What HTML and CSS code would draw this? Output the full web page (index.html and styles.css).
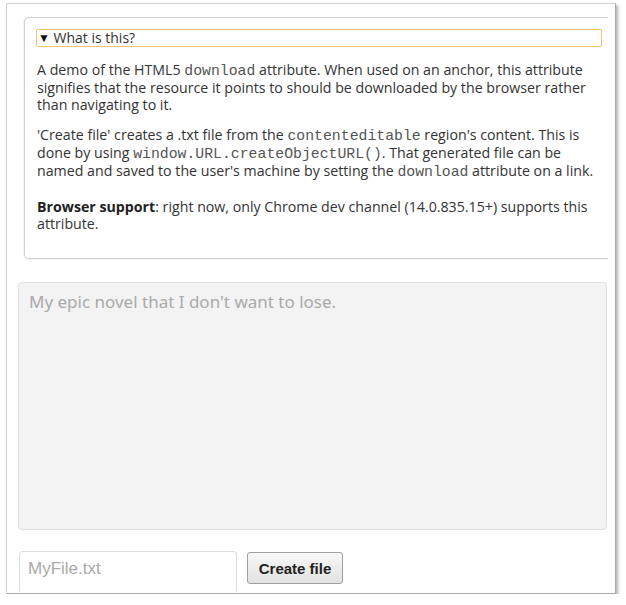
FILE: index.html
```html
<!DOCTYPE html>
<html>
<head>
<meta charset="utf-8">
<link rel="stylesheet" href="styles.css">
</head>
<body>
<div class="panel">
  <div class="details">
    <div class="summary"><span class="tri">&#9660;</span> What is this?</div>
    <p>A demo of the HTML5 <code>download</code> attribute. When used on an anchor, this attribute signifies that the resource it points to should be downloaded by the browser rather than navigating to it.</p>
    <p>'Create file' creates a .txt file from the <code>contenteditable</code> region's content. This is done by using <code>window.URL.createObjectURL()</code>. That generated file can be named and saved to the user's machine by setting the <code>download</code> attribute on a link.</p>
    <p class="support"><strong>Browser support</strong>: right now, only Chrome dev channel (14.0.835.15+) supports this attribute.</p>
  </div>
  <div class="editor">My epic novel that I don't want to lose.</div>
  <div class="controls">
    <div class="filename">MyFile.txt</div>
    <button class="btn">Create file</button>
  </div>
</div>
</body>
</html>
```

FILE: styles.css
```css
html, body {
  margin: 0;
  padding: 0;
  background: #fff;
}
body {
  font-family: "Open Sans", "Noto Sans", sans-serif;
  color: #333;
}
.panel {
  box-sizing: border-box;
  margin: 3px 0 0 6px;
  width: 610px;
  height: 591px;
  border: 1px solid #d2d2d2;
  border-right-color: #aaa;
  border-bottom-color: #aaa;
  box-shadow: 2px 2px 3px rgba(0,0,0,0.3);
  padding: 13px 0 0 0;
  overflow: hidden;
}
.details {
  margin: 0 7px 0 17px;
  border: 1px solid #d0d0d0;
  border-right: none;
  border-radius: 5px 0 0 5px;
  padding: 11px 6px 25px 11px;
  box-shadow: -1px 1px 1px rgba(0,0,0,0.05);
}
.summary {
  border: 1px solid #f3c46c;
  border-radius: 2px;
  height: 16px;
  line-height: 16px;
  font-size: 14px;
  padding-left: 1px;
  color: #333;
}
.tri {
  font-size: 12px;
  color: #111;
  position: relative;
  top: -1px;
}
.details p {
  margin: 12.5px 0 0 1px;
  font-size: 14.2px;
  line-height: 17.6px;
}
.details p:first-of-type {
  margin-top: 14px;
}
.details p.support {
  margin-top: 18px;
}
.details p code {
  font-family: "Courier New", "Nimbus Mono PS", "Nimbus Mono L", "FreeMono", "Liberation Mono", monospace;
  font-weight: 400;
  font-size: 14.8px;
  line-height: 1;
  color: #555;
}
.details p strong {
  font-weight: 700;
  color: #222;
}
.editor {
  box-sizing: border-box;
  margin: 23px 8px 0 11px;
  height: 248px;
  background: #f3f3f3;
  border: 1px solid #e0e0e0;
  border-radius: 4px;
  padding: 7px 10px;
  font-size: 17px;
  color: #aaa;
  font-family: "Noto Sans", "Open Sans", sans-serif;
}
.controls {
  display: flex;
  align-items: flex-start;
  gap: 10px;
  margin: 21px 0 0 12px;
}
.filename {
  box-sizing: border-box;
  width: 218px;
  height: 40px;
  border: 1px solid #ddd;
  border-bottom: none;
  border-radius: 4px 4px 0 0;
  padding: 7px 8px;
  font-family: "Liberation Sans", Arial, sans-serif;
  font-size: 17px;
  color: #aaa;
}
.btn {
  box-sizing: border-box;
  height: 32px;
  width: 96px;
  margin-top: 1px;
  border: 1px solid #a0a0a0;
  border-radius: 3px;
  background: linear-gradient(#f8f8f8, #e2e2e2);
  font-family: "Liberation Sans", Arial, sans-serif;
  font-weight: 700;
  font-size: 15px;
  color: #222;
  padding: 0;
}
```
